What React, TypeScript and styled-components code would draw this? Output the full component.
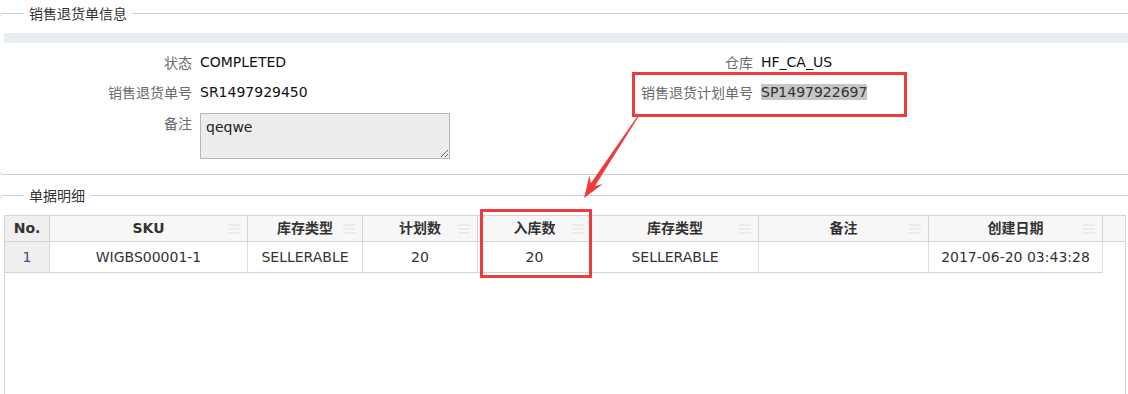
import React from 'react';
import styled, { createGlobalStyle } from 'styled-components';

const GlobalStyle = createGlobalStyle`
  html, body { margin: 0; padding: 0; background: #fff; }
  body {
    font-family: "DejaVu Sans", "Noto Sans CJK SC", sans-serif;
    font-size: 14px;
    color: #222;
    overflow: hidden;
  }
`;

const Page = styled.div`
  position: relative;
  width: 1128px;
  height: 394px;
  overflow: hidden;
`;

const Fieldset = styled.fieldset<{ $mt: number; $pb?: number }>`
  margin: ${(p) => p.$mt}px -12px 0 -1px;
  padding: 0 11px ${(p) => p.$pb ?? 0}px 0;
  border: 1px solid #c8d0d8;
  border-radius: 4px;
  min-width: 0;
`;

const Legend = styled.legend`
  margin-left: 24px;
  padding: 0 5px;
  font-family: "Noto Sans CJK SC", sans-serif;
  font-size: 14px;
  line-height: 20px;
  color: #333;
`;

const BlueBar = styled.div`
  margin: 10px 0 0 4px;
  height: 10px;
  background: #e8eef6;
`;

const Form = styled.div`
  display: grid;
  grid-template-columns: 200px 360px 201px 1fr;
  grid-template-rows: 30px 30px auto;
  margin-top: 4px;
`;

const Label = styled.div<{ $top?: boolean }>`
  text-align: right;
  padding-right: 8px;
  font-family: "Noto Sans CJK SC", sans-serif;
  font-size: 14px;
  color: #6a6a6a;
  line-height: ${(p) => (p.$top ? '20px' : '30px')};
  padding-top: ${(p) => (p.$top ? '6px' : '0')};
`;

const Value = styled.div`
  font-family: "DejaVu Sans", "Noto Sans CJK SC", sans-serif;
  font-size: 14px;
  line-height: 30px;
  color: #111;
  white-space: nowrap;
`;

const Selected = styled.span`
  background: #c6c6c6;
  color: #333;
`;

const NoteBox = styled.textarea`
  display: block;
  margin-top: 6px;
  box-sizing: border-box;
  width: 250px;
  height: 46px;
  padding: 4px 5px;
  border: 1px solid #b8b8b8;
  background: #ececec;
  font-family: "DejaVu Sans", sans-serif;
  font-size: 14px;
  line-height: 18px;
  color: #222;
  outline: none;
`;

const Grid = styled.div`
  margin: 10px 2px 0 4px;
  border: 1px solid #d4d4d4;
  height: 230px;
  background: #fff;
`;

const HeaderRow = styled.div`
  display: flex;
  height: 25px;
  background: #f7f7f7;
  border-bottom: 1px solid #d4d4d4;
`;

const HeaderCell = styled.div<{ $w: number; $index?: boolean }>`
  position: relative;
  box-sizing: border-box;
  flex: 0 0 ${(p) => p.$w}px;
  border-right: 1px solid #d4d4d4;
  background: ${(p) => (p.$index ? '#efefef' : 'transparent')};
  text-align: center;
  font-family: "DejaVu Sans", "Noto Sans CJK SC", sans-serif;
  font-weight: bold;
  font-size: 14px;
  line-height: 25px;
  color: #333;
`;

const SortIcon = styled.span`
  position: absolute;
  right: 7px;
  top: 8px;
  width: 12px;
  height: 10px;
  display: flex;
  flex-direction: column;
  justify-content: space-between;
  & > i {
    display: block;
    height: 2px;
    background: #ebebeb;
  }
`;

const BodyRow = styled.div`
  display: flex;
  height: 30px;
  width: 1098px;
  border-bottom: 1px solid #d4d4d4;
`;

const BodyCell = styled.div<{ $w: number; $index?: boolean }>`
  box-sizing: border-box;
  flex: 0 0 ${(p) => p.$w}px;
  border-right: 1px solid #dcdcdc;
  background: ${(p) => (p.$index ? '#efefef' : '#fff')};
  text-align: center;
  font-family: "DejaVu Sans", "Noto Sans CJK SC", sans-serif;
  font-size: 14px;
  line-height: 30px;
  color: ${(p) => (p.$index ? '#33557a' : '#333')};
  white-space: nowrap;
`;

const RedBox = styled.div`
  position: absolute;
  box-sizing: border-box;
  border: 3px solid #ee3b3b;
  pointer-events: none;
`;

const ArrowSvg = styled.svg`
  position: absolute;
  left: 570px;
  top: 110px;
  pointer-events: none;
`;

const columns = [
  { title: 'No.', w: 45, index: true },
  { title: 'SKU', w: 198 },
  { title: '库存类型', w: 115 },
  { title: '计划数', w: 115 },
  { title: '入库数', w: 114 },
  { title: '库存类型', w: 167 },
  { title: '备注', w: 170 },
  { title: '创建日期', w: 174 },
];

const row = ['1', 'WIGBS00001-1', 'SELLERABLE', '20', '20', 'SELLERABLE', '', '2017-06-20 03:43:28'];

export default function App() {
  return (
    <Page>
      <GlobalStyle />
      <Fieldset $mt={3} $pb={15}>
        <Legend>销售退货单信息</Legend>
        <BlueBar />
        <Form>
          <Label>状态</Label>
          <Value>COMPLETED</Value>
          <Label>仓库</Label>
          <Value>HF_CA_US</Value>

          <Label>销售退货单号</Label>
          <Value>SR1497929450</Value>
          <Label>销售退货计划单号</Label>
          <Value>
            <Selected>SP1497922697</Selected>
          </Value>

          <Label $top>备注</Label>
          <div>
            <NoteBox readOnly defaultValue="qeqwe" />
          </div>
        </Form>
      </Fieldset>

      <Fieldset $mt={10}>
        <Legend>单据明细</Legend>
        <Grid>
          <HeaderRow>
            {columns.map((c, i) => (
              <HeaderCell key={i} $w={c.w} $index={c.index}>
                {c.title}
                {!c.index && (
                  <SortIcon>
                    <i />
                    <i />
                    <i />
                  </SortIcon>
                )}
              </HeaderCell>
            ))}
          </HeaderRow>
          <BodyRow>
            {columns.map((c, i) => (
              <BodyCell key={i} $w={c.w} $index={c.index}>
                {row[i]}
              </BodyCell>
            ))}
          </BodyRow>
        </Grid>
      </Fieldset>

      <RedBox style={{ left: 632, top: 72, width: 275, height: 45 }} />
      <RedBox style={{ left: 480, top: 209, width: 112, height: 69 }} />
      <ArrowSvg width={80} height={95} viewBox="570 110 80 95">
        <polygon
          points="638.6,116.6 595.0,186.1 602.9,184.1 584,198 589.5,175.3 590.8,183.3 637.4,116.2"
          fill="#ee3b3b"
        />
      </ArrowSvg>
    </Page>
  );
}
